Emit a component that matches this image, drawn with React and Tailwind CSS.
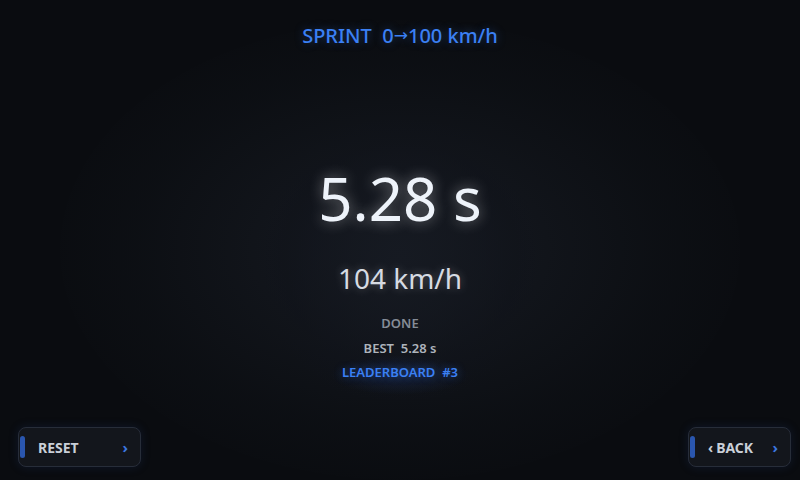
import React from 'react';

function NavButton({ label, back }) {
  return (
    <div
      className={
        back
          ? 'relative flex h-10 w-[103px] items-center rounded-lg border border-[#272d39] bg-[#13161c] shadow-[0_0_10px_rgba(30,60,120,0.25)]'
          : 'relative flex h-10 w-[123px] items-center rounded-lg border border-[#272d39] bg-[#13161c] shadow-[0_0_10px_rgba(30,60,120,0.25)]'
      }
    >
      <div className="ml-[1px] h-[22px] w-[5px] rounded-sm bg-[#2a56ae]" />
      <div className="flex items-center pl-[13px]">
        {back && <span className="mr-[3px] text-[14px] font-bold text-[#c9cfd8]">‹</span>}
        <span className="text-[14px] font-bold text-[#c9cfd8]">{label}</span>
      </div>
      <span className="absolute right-[12px] top-[8px] text-[15px] font-bold text-[#3b76e0]">›</span>
    </div>
  );
}

export default function App() {
  return (
    <div
      className="relative flex h-[480px] w-[800px] flex-col overflow-hidden bg-[#0a0c10] text-white"
      style={{ fontFamily: '"Noto Sans", "Open Sans", sans-serif' }}
    >
      {/* background glows */}
      <div className="pointer-events-none absolute left-[60px] top-[20px] h-[460px] w-[680px] rounded-[50%] bg-[radial-gradient(ellipse_at_center,rgba(24,28,36,0.9)_0%,rgba(14,17,22,0.6)_55%,rgba(10,12,16,0)_75%)]" />
      <div className="pointer-events-none absolute left-[265px] top-[120px] h-[280px] w-[270px] rounded-[45%] bg-[radial-gradient(ellipse_at_center,rgba(22,26,34,0.9)_0%,rgba(16,19,26,0.5)_60%,rgba(10,12,16,0)_75%)]" />
      <div className="pointer-events-none absolute left-[330px] top-[355px] h-[40px] w-[140px] rounded-[50%] bg-[radial-gradient(ellipse_at_center,rgba(40,80,170,0.22)_0%,rgba(10,12,16,0)_70%)]" />

      <div className="relative flex justify-center pt-[21px]">
        <span className="flex items-center whitespace-pre text-[20px] font-medium text-[#3b80f4] [text-shadow:0_0_10px_rgba(59,128,244,0.35)]">
          SPRINT  0<span style={{ fontFamily: '"DejaVu Sans", sans-serif' }} className="text-[17px]">→</span>100 km/h
        </span>
      </div>

      <div className="relative flex flex-1 flex-col items-center pt-[109px]">
        <div className="text-[60px] leading-[76px] text-[#eef3fa] [text-shadow:0_0_14px_rgba(255,255,255,0.45)]">
          5.28 s
        </div>
        <div className="mt-[24px] text-[28px] leading-[36px] text-[#d6dbe2] [text-shadow:0_0_10px_rgba(255,255,255,0.3)]">
          104 km/h
        </div>
        <div className="mt-[18px] text-[13px] font-semibold leading-[18px] text-[#858c97]">DONE</div>
        <div className="mt-[7px] whitespace-pre text-[13px] font-semibold leading-[18px] text-[#aeb4bc]">BEST  5.28 s</div>
        <div className="mt-[6px] whitespace-pre text-[13px] font-semibold leading-[18px] text-[#3b80f4] [text-shadow:0_0_8px_rgba(59,128,244,0.4)]">
          LEADERBOARD  #3
        </div>
      </div>

      <div className="relative flex items-end justify-between pb-[13px] pl-[18px] pr-[9px]">
        <NavButton label="RESET" />
        <NavButton label="BACK" back />
      </div>
    </div>
  );
}
